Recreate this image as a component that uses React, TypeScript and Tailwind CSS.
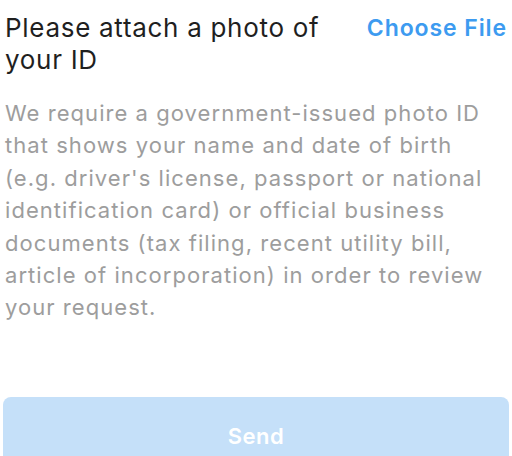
export default function App() {
  return (
    <div className="h-[456px] w-[512px] overflow-hidden bg-white font-['Inter',sans-serif]">
      <div className="flex items-start justify-between pl-[5px] pr-[5px] pt-[12px]">
        <h1 className="w-[340px] text-[26px] leading-[32px] font-normal tracking-[0.7px] text-[#1f1f1f]">
          Please attach a photo of your ID
        </h1>
        <button className="text-[23px] leading-[32px] font-semibold tracking-[0.9px] text-[#3d9bf0]">
          Choose File
        </button>
      </div>

      <p className="mt-[21px] w-[495px] pl-[5px] text-[22px] leading-[32.4px] tracking-[1.05px] text-[#9d9d9d]">
        We require a government-issued photo ID that shows your name and date of birth (e.g.
        driver's license, passport or national identification card) or official business
        documents (tax filing, recent utility bill, article of incorporation) in order to review
        your request.
      </p>

      <div className="mt-[73px] px-[3px]">
        <button
          disabled
          className="h-[90px] w-full rounded-[8px] bg-[#c5e0f9] pb-[30px] pt-[20px] text-[22px] font-semibold tracking-[0.5px] text-white"
        >
          Send
        </button>
      </div>
    </div>
  );
}
